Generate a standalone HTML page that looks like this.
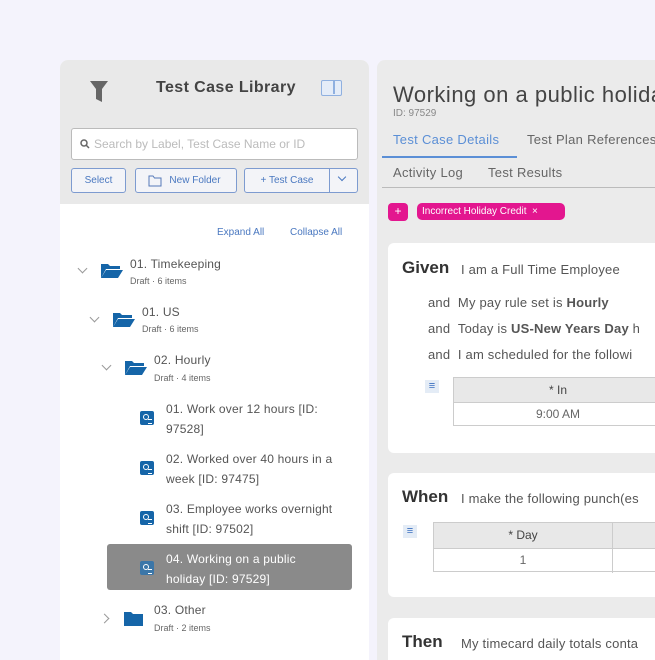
<!DOCTYPE html>
<html><head><meta charset="utf-8"><style>
*{box-sizing:border-box;margin:0;padding:0}
body{width:655px;height:655px;overflow:hidden;background:#f4f3fc;font-family:"Liberation Sans",sans-serif;position:relative;color:#444}
.abs{position:absolute}
#left{left:60px;top:60px;width:309px;height:600px;background:#fff;border-radius:8px 8px 0 0;overflow:hidden}
#lh{left:0;top:0;width:309px;height:144px;background:#e9e9e9}
#right{left:377px;top:60px;width:290px;height:600px;background:#ebebeb;border-radius:8px 0 0 0;overflow:hidden}
.btn{position:absolute;border:1px solid #7d9bd0;border-radius:3px;background:#f3f4f8;color:#4a78c0;font-size:10px;text-align:center;line-height:23px;height:25px}
.t{position:absolute;font-size:12px;color:#555;white-space:nowrap;letter-spacing:0.2px}
.s{position:absolute;font-size:9px;color:#666;white-space:nowrap}
.chev{position:absolute;width:7px;height:7px;border-right:1.3px solid #999;border-bottom:1.3px solid #999;transform:rotate(45deg)}
.card{position:absolute;left:11px;width:290px;background:#fff;border-radius:6px}
.tc{position:absolute;width:14px;height:14px;background:#1565a8;border-radius:2px}
.tc:before{content:"";position:absolute;left:3px;top:3px;width:4px;height:4px;border:1.2px solid #fff;border-radius:50%}
.tc:after{content:"";position:absolute;left:8px;top:8px;width:4px;height:3px;border-top:1px solid #fff;border-bottom:1px solid #fff}
</style></head><body>
<div id="left" class="abs">
 <div id="lh" class="abs"></div>
 <svg class="abs" style="left:29px;top:19px" width="20" height="24" viewBox="0 0 20 24"><path d="M1 2h18l-6 8v13l-6-3V10z" fill="#666"/></svg>
 <div class="abs" style="left:96px;top:19px;font-size:16px;color:#444;font-weight:bold;letter-spacing:0.4px">Test Case Library</div>
 <div class="abs" style="left:261px;top:20px;width:21px;height:16px;border:1.5px solid #8fb0e0;border-radius:2px;background:#e4ecf8"><div class="abs" style="left:11px;top:0;width:1.5px;height:13px;background:#8fb0e0"></div></div>
 <div class="abs" style="left:11px;top:68px;width:287px;height:32px;background:#fff;border:1px solid #bbb;border-radius:3px"></div>
 <svg class="abs" style="left:20px;top:79px" width="10" height="10"><circle cx="4" cy="4" r="3" stroke="#666" stroke-width="1.5" fill="none"/><path d="M6 6l3 3" stroke="#666" stroke-width="1.5"/></svg>
 <div class="abs" style="left:34px;top:77px;font-size:12px;color:#bbb;white-space:nowrap">Search by Label, Test Case Name or ID</div>
 <div class="btn" style="left:11px;top:108px;width:55px">Select</div>
 <div class="btn" style="left:75px;top:108px;width:102px;padding-left:18px">New Folder</div>
 <svg class="abs" style="left:88px;top:115px" width="14" height="12"><path d="M1 1h4l1.5 2H13v8H1z" fill="none" stroke="#5579b8" stroke-width="1"/></svg>
 <div class="btn" style="left:184px;top:108px;width:114px"><span style="position:absolute;left:0;width:84px">+ Test Case</span><span style="position:absolute;left:84px;top:0;width:1px;height:23px;background:#7d9bd0"></span></div>
 <div class="chev" style="left:279px;top:114px;border-color:#4a78c0;width:6px;height:6px"></div>
 <div class="abs" style="left:157px;top:167px;font-size:10px;color:#4a78c0">Expand All</div>
 <div class="abs" style="left:230px;top:167px;font-size:10px;color:#4a78c0">Collapse All</div>

 <div class="chev" style="left:19px;top:205px"></div>
 <svg class="abs" style="left:40px;top:202px" width="24" height="17"><path d="M1 2h7l2 2h10v3H6L1 16z" fill="#1565a8"/><path d="M6 8h17l-5 8H1z" fill="#1565a8"/></svg>
 <div class="t" style="left:70px;top:197px">01. Timekeeping</div>
 <div class="s" style="left:70px;top:216px">Draft · 6 items</div>

 <div class="chev" style="left:31px;top:254px"></div>
 <svg class="abs" style="left:52px;top:251px" width="24" height="17"><path d="M1 2h7l2 2h10v3H6L1 16z" fill="#1565a8"/><path d="M6 8h17l-5 8H1z" fill="#1565a8"/></svg>
 <div class="t" style="left:82px;top:245px">01. US</div>
 <div class="s" style="left:82px;top:264px">Draft · 6 items</div>

 <div class="chev" style="left:43px;top:302px"></div>
 <svg class="abs" style="left:64px;top:299px" width="24" height="17"><path d="M1 2h7l2 2h10v3H6L1 16z" fill="#1565a8"/><path d="M6 8h17l-5 8H1z" fill="#1565a8"/></svg>
 <div class="t" style="left:94px;top:293px">02. Hourly</div>
 <div class="s" style="left:94px;top:313px">Draft · 4 items</div>

 <div class="tc" style="left:80px;top:351px"></div>
 <div class="t" style="left:106px;top:339px;line-height:20px">01. Work over 12 hours [ID:<br>97528]</div>
 <div class="tc" style="left:80px;top:401px"></div>
 <div class="t" style="left:106px;top:389px;line-height:20px">02. Worked over 40 hours in a<br>week [ID: 97475]</div>
 <div class="tc" style="left:80px;top:451px"></div>
 <div class="t" style="left:106px;top:439px;line-height:20px">03. Employee works overnight<br>shift [ID: 97502]</div>
 <div class="abs" style="left:47px;top:484px;width:245px;height:46px;background:#8a8a8a;border-radius:3px"></div>
 <div class="tc" style="left:80px;top:501px;background:#3b76a8"></div>
 <div class="t" style="left:106px;top:489px;line-height:20px;color:#fff">04. Working on a public<br>holiday [ID: 97529]</div>

 <div class="chev" style="left:41px;top:555px;transform:rotate(-45deg)"></div>
 <svg class="abs" style="left:64px;top:551px" width="20" height="16"><path d="M0 1h7l2 2h10v12H0z" fill="#1565a8"/></svg>
 <div class="t" style="left:94px;top:543px">03. Other</div>
 <div class="s" style="left:94px;top:563px">Draft · 2 items</div>
</div>

<div id="right" class="abs">
 <div class="abs" style="left:16px;top:22px;font-size:22px;color:#444;white-space:nowrap;letter-spacing:0.5px">Working on a public holiday</div>
 <div class="abs" style="left:16px;top:48px;font-size:10px;color:#888">ID: 97529</div>
 <div class="abs" style="left:16px;top:72px;font-size:13px;color:#5b8fd6;letter-spacing:0.3px">Test Case Details</div>
 <div class="abs" style="left:150px;top:72px;font-size:13px;color:#666;white-space:nowrap;letter-spacing:0.3px">Test Plan References</div>
 <div class="abs" style="left:5px;top:96px;width:135px;height:2px;background:#5b8fd6"></div>
 <div class="abs" style="left:16px;top:105px;font-size:13px;color:#666;letter-spacing:0.3px">Activity Log</div>
 <div class="abs" style="left:111px;top:105px;font-size:13px;color:#666;letter-spacing:0.3px">Test Results</div>
 <div class="abs" style="left:5px;top:127px;width:290px;height:1px;background:#bbb"></div>
 <div class="abs" style="left:11px;top:143px;width:20px;height:18px;background:#e3168f;border-radius:4px;color:#fff;font-size:12px;text-align:center;line-height:17px">+</div>
 <div class="abs" style="left:40px;top:143px;width:148px;height:17px;background:#e3168f;border-radius:5px;color:#fff;font-size:10px;line-height:17px;padding-left:5px">Incorrect Holiday Credit &nbsp;×</div>

 <div class="card" style="top:183px;height:210px">
  <div class="abs" style="left:14px;top:15px;font-size:17px;font-weight:bold;color:#333">Given</div>
  <div class="t" style="left:73px;top:19px;font-size:13px">I am a Full Time Employee</div>
  <div class="t" style="left:40px;top:52px;font-size:13px">and &nbsp;My pay rule set is <b>Hourly</b></div>
  <div class="t" style="left:40px;top:78px;font-size:13px">and &nbsp;Today is <b>US-New Years Day</b> h</div>
  <div class="t" style="left:40px;top:104px;font-size:13px">and &nbsp;I am scheduled for the followi</div>
  <div class="abs" style="left:37px;top:137px;width:14px;height:13px;background:#e4ecf6;color:#3b6fc0;font-size:11px;line-height:12px;text-align:center">≡</div>
  <div class="abs" style="left:65px;top:134px;width:240px;height:26px;background:#e8e8e8;border:1px solid #ccc;font-size:12px;text-align:center;line-height:24px;padding-right:30px">* In</div>
  <div class="abs" style="left:65px;top:159px;width:240px;height:24px;border:1px solid #ccc;font-size:12px;text-align:center;line-height:22px;color:#666;padding-right:30px">9:00 AM</div>
 </div>

 <div class="card" style="top:413px;height:124px">
  <div class="abs" style="left:14px;top:14px;font-size:17px;font-weight:bold;color:#333">When</div>
  <div class="t" style="left:73px;top:18px;font-size:13px">I make the following punch(es</div>
  <div class="abs" style="left:15px;top:52px;width:14px;height:13px;background:#e4ecf6;color:#3b6fc0;font-size:11px;line-height:12px;text-align:center">≡</div>
  <div class="abs" style="left:45px;top:49px;width:260px;height:27px;background:#e8e8e8;border:1px solid #ccc"><div class="abs" style="left:0;width:178px;text-align:center;font-size:12px;line-height:25px">* Day</div><div class="abs" style="left:178px;top:0;width:1px;height:50px;background:#ccc"></div></div>
  <div class="abs" style="left:45px;top:75px;width:260px;height:24px;border:1px solid #ccc"><div class="abs" style="left:0;width:178px;text-align:center;font-size:12px;line-height:22px;color:#666">1</div></div>
 </div>

 <div class="card" style="top:558px;height:60px">
  <div class="abs" style="left:14px;top:14px;font-size:17px;font-weight:bold;color:#333">Then</div>
  <div class="t" style="left:73px;top:18px;font-size:13px">My timecard daily totals conta</div>
 </div>
</div>
</body></html>
